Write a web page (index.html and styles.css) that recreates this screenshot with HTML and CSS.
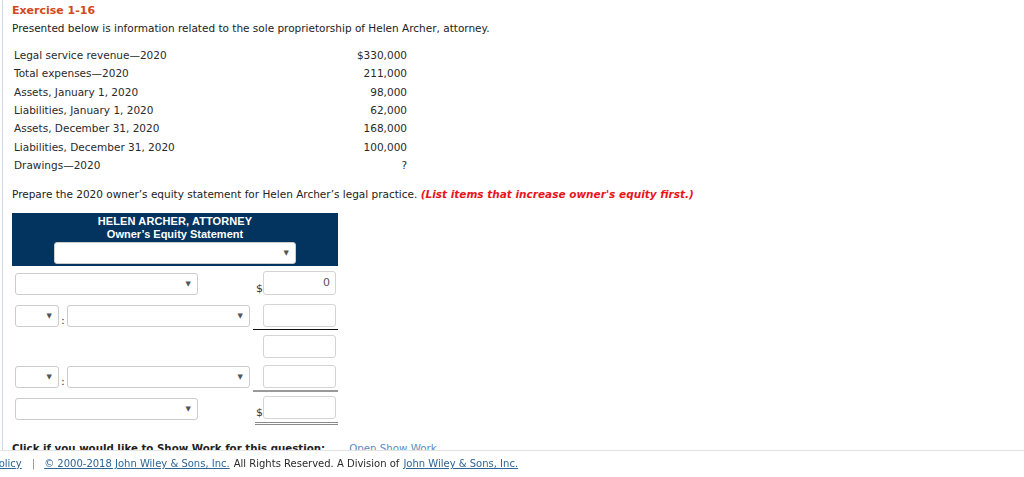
FILE: index.html
```html
<!DOCTYPE html>
<html>
<head>
<meta charset="utf-8">
<link rel="stylesheet" href="styles.css">
</head>
<body>
<div class="page">
  <h1 class="title">Exercise 1-16</h1>
  <p class="intro">Presented below is information related to the sole proprietorship of Helen Archer, attorney.</p>
  <table class="data">
    <tr><td>Legal service revenue—2020</td><td class="num">$330,000</td></tr>
    <tr><td>Total expenses—2020</td><td class="num">211,000</td></tr>
    <tr><td>Assets, January 1, 2020</td><td class="num">98,000</td></tr>
    <tr><td>Liabilities, January 1, 2020</td><td class="num">62,000</td></tr>
    <tr><td>Assets, December 31, 2020</td><td class="num">168,000</td></tr>
    <tr><td>Liabilities, December 31, 2020</td><td class="num">100,000</td></tr>
    <tr><td>Drawings—2020</td><td class="num">?</td></tr>
  </table>
  <p class="prompt">Prepare the 2020 owner’s equity statement for Helen Archer’s legal practice. <em class="hint">(List items that increase owner's equity first.)</em></p>

  <div class="sheet">
    <div class="sheet-head">
      <div class="co">HELEN ARCHER, ATTORNEY</div>
      <div class="stmt">Owner’s Equity Statement</div>
      <div class="sel sel-date"><span class="arr">▼</span></div>
    </div>

    <div class="row r1">
      <div class="left"><div class="sel sel-wide"><span class="arr">▼</span></div></div>
      <div class="amt"><span class="dollar">$</span><div class="inp">0</div></div>
    </div>
    <div class="row r2">
      <div class="left"><div class="sel sel-small"><span class="arr">▼</span></div><span class="colon">:</span><div class="sel sel-wide"><span class="arr">▼</span></div></div>
      <div class="amt line-single"><span class="dollar"></span><div class="inp"></div></div>
    </div>
    <div class="row r3">
      <div class="left"></div>
      <div class="amt"><span class="dollar"></span><div class="inp"></div></div>
    </div>
    <div class="row r4">
      <div class="left"><div class="sel sel-small"><span class="arr">▼</span></div><span class="colon">:</span><div class="sel sel-wide"><span class="arr">▼</span></div></div>
      <div class="amt line-gray"><span class="dollar"></span><div class="inp"></div></div>
    </div>
    <div class="row r5">
      <div class="left"><div class="sel sel-wide"><span class="arr">▼</span></div></div>
      <div class="amt line-double"><span class="dollar">$</span><div class="inp"></div></div>
    </div>
  </div>

  <p class="showwork"><b>Click if you would like to Show Work for this question:</b><a class="open">Open Show Work</a></p>
</div>

<div class="footer">
  <a class="flink first">Policy</a><span class="pipe">|</span><a class="flink">© 2000-2018 John Wiley &amp; Sons, Inc.</a><span class="ftext">All Rights Reserved. A Division of</span><a class="flink">John Wiley &amp; Sons, Inc.</a>
</div>
</body>
</html>
```

FILE: styles.css
```css
html, body {
  margin: 0;
  padding: 0;
  background: #fff;
}
body {
  font-family: "DejaVu Sans", Verdana, sans-serif;
  font-size: 10.5px;
  color: #222;
  overflow: hidden;
  height: 477px;
}
.page {
  margin-left: 2px;
  border-left: 1px solid #cdd9e6;
  padding: 4px 0 0 9px;
  height: 473px;
}
.title {
  margin: 0;
  font-size: 11px;
  font-weight: bold;
  color: #d2491d;
  line-height: 14px;
}
.intro {
  margin: 3px 0 0 0;
  line-height: 14px;
}
.data {
  border-collapse: collapse;
  margin: 11px 0 0 0;
  width: 395px;
}
.data td {
  padding: 0 0 0 2px;
  height: 18.3px;
  line-height: 14px;
  color: #2a2a2a;
}
.data td.num {
  text-align: right;
  padding: 0;
}
.prompt {
  margin: 13px 0 0 0;
  line-height: 14px;
}
.hint {
  color: #e8161c;
  font-weight: bold;
  font-style: italic;
}
.sheet {
  width: 326px;
  margin-top: 12px;
}
.sheet-head {
  background: #03335f;
  color: #fff;
  text-align: center;
  padding: 2px 0 2px 0;
  display: flex;
  flex-direction: column;
  align-items: center;
}
.co, .stmt {
  font-family: "Liberation Sans", Arial, sans-serif;
  font-weight: bold;
  font-size: 11px;
  line-height: 13px;
}
.co {
  letter-spacing: 0.1px;
}
.sel {
  position: relative;
  box-sizing: border-box;
  height: 22px;
  border: 1px solid #ccc;
  border-radius: 3px;
  background: #fff;
}
.arr {
  position: absolute;
  right: 6px;
  top: 6px;
  font-size: 7px;
  line-height: 8px;
  color: #555;
}
.sel-date {
  width: 242px;
  margin-top: 1px;
}
.row {
  display: flex;
  align-items: flex-end;
}
.left {
  width: 241px;
  display: flex;
  align-items: center;
  padding-left: 3px;
  box-sizing: border-box;
}
.sel-wide {
  width: 183px;
}
.sel-small {
  width: 44px;
}
.colon {
  width: 8px;
  text-align: center;
  padding-top: 8px;
  font-size: 10px;
}
.amt {
  width: 85px;
  display: flex;
  align-items: flex-end;
  box-sizing: border-box;
}
.dollar {
  width: 10px;
  font-size: 11px;
  line-height: 12px;
  color: #333;
  text-align: right;
}
.inp {
  box-sizing: border-box;
  width: 73px;
  height: 23px;
  border: 1px solid #d4d4d4;
  border-radius: 3px;
  text-align: right;
  padding: 5px 5px 0 0;
  color: #555;
  font-size: 11px;
  line-height: 12px;
}
.r1 { margin-top: 5px; }
.r1 .inp { height: 24px; }
.r2 { margin-top: 9px; }
.r2 .left { padding-bottom: 3px; }
.line-single { border-bottom: 1px solid #111; padding-bottom: 2px; }
.r3 { margin-top: 5px; }
.r4 { margin-top: 7px; }
.r4 .left { padding-bottom: 4px; }
.line-gray { border-bottom: 2px solid #9a9a9a; padding-bottom: 2px; }
.r5 { margin-top: 4px; }
.r5 .left { padding-bottom: 5px; }
.line-double { border-bottom: 3px double #8a8a8a; padding-bottom: 3px; width: 83px; margin-left: 2px; }
.r5 .dollar { width: 8px; }
.showwork {
  margin: 16px 0 0 0;
  font-size: 10.25px;
  line-height: 14px;
}
.open {
  margin-left: 24px;
  color: #5a8cc0;
  font-weight: normal;
}
.footer {
  position: fixed;
  left: 0;
  right: 0;
  bottom: 0;
  height: 27px;
  background: #fff;
  border-top: 1px solid #e3e3e3;
  display: flex;
  align-items: center;
  font-size: 10px;
  white-space: nowrap;
  padding-bottom: 1px;
  box-sizing: border-box;
}
.flink {
  color: #2d6596;
  text-decoration: underline;
}
.flink.first {
  margin-left: -7px;
}
.pipe {
  color: #5b9bd5;
  margin: 0 9px 0 10px;
}
.ftext {
  color: #2a2a2a;
  margin: 0 4px 0 4px;
}
```
